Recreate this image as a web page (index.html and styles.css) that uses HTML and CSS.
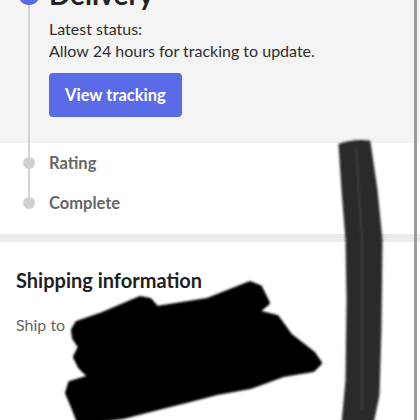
FILE: index.html
```html
<!DOCTYPE html>
<html>
<head>
<meta charset="utf-8">
<link rel="stylesheet" href="styles.css">
</head>
<body>
<div class="page">
  <section class="current">
    <div class="rail rail-current">
      <span class="dot dot-active"></span>
      <span class="seg"></span>
    </div>
    <div class="current-body">
      <h2 class="step-title">Delivery</h2>
      <p class="status">Latest status:<br>Allow 24 hours for tracking to update.</p>
      <button class="btn">View tracking</button>
    </div>
  </section>
  <section class="upcoming">
    <div class="step">
      <div class="rail"><span class="seg"></span><span class="dot"></span><span class="seg"></span></div>
      <div class="step-label">Rating</div>
    </div>
    <div class="step">
      <div class="rail"><span class="seg"></span><span class="dot"></span><span class="seg seg-none"></span></div>
      <div class="step-label">Complete</div>
    </div>
  </section>
  <div class="divider"></div>
  <section class="shipping">
    <h3 class="ship-title">Shipping information</h3>
    <p class="ship-to">Ship to</p>
  </section>
</div>
<div class="scrollbar"></div>
<svg class="scribble" width="420" height="420" viewBox="0 0 420 420">
  <defs><filter id="soft" x="-10%" y="-10%" width="120%" height="120%"><feGaussianBlur stdDeviation="1.3"/></filter></defs>
  <g filter="url(#soft)">
    <path fill="#060606" stroke="#060606" stroke-width="4" stroke-linejoin="round" d="M73 330 L77 323 L100 315 L140 298 L150 300 L157 308 L207 300 L250 283 L260 287 L268 303 L257 312 L277 317 L290 335 L313 353 L320 363 L313 370 L283 375 L250 387 L217 393 L190 400 L150 410 L123 417 L100 420 L78 420 L73 407 L67 393 L70 383 L90 377 L80 367 L75 357 L80 347 L74 338 Z"/>
    <path fill="#2a2a2a" stroke="#2a2a2a" stroke-width="3" stroke-linejoin="round" d="M340 145 Q354 140 369 142 L376 190 L381 240 L380 330 L378 395 L372 424 L343 424 L347 380 L348 300 L347 240 L343 190 Z"/>
    <path fill="none" stroke="#3a3a3a" stroke-width="2" d="M356 146 L362 240 L362 410"/>
  </g>
</svg>
</body>
</html>
```

FILE: styles.css
```css
* { box-sizing: border-box; }
html, body { margin: 0; padding: 0; }
body {
  width: 420px;
  height: 420px;
  overflow: hidden;
  background: #fff;
  font-family: Lato, "Noto Sans", sans-serif;
  color: #2b2b2b;
  position: relative;
}
.page { margin-top: -23px; }

.rail {
  width: 49px;
  padding-left: 8px;
  display: flex;
  flex-direction: column;
  align-items: center;
  flex: none;
}
.rail > * { flex: none; }
.seg { width: 2px; flex: 1 1 auto; background: #d2d2d4; }
.seg-none { background: transparent; }
.dot { width: 12px; height: 12px; border-radius: 50%; background: #cfcfd3; }
.dot-active { width: 22px; height: 22px; background: #5a6be8; margin-top: 6px; }

.current {
  display: flex;
  background: #f4f4f4;
}
.rail-current { align-self: stretch; }
.current-body { padding-bottom: 26px; }
.step-title {
  margin: 0;
  font-size: 28px;
  line-height: 34px;
  font-weight: 700;
  color: #222;
}
.status {
  margin: 7px 0 0;
  font-size: 16px;
  line-height: 22px;
  color: #2e2e2e;
}
.btn {
  margin-top: 11px;
  height: 44px;
  padding: 0 16px;
  border: 0;
  border-radius: 4px;
  background: #5a6be8;
  color: #fff;
  font-family: inherit;
  font-size: 16.5px;
  font-weight: 700;
  display: block;
}

.upcoming { padding-bottom: 11px; }
.step { display: flex; height: 40px; }
.step .rail { align-self: stretch; }
.step-label {
  display: flex;
  align-items: center;
  font-size: 16.5px;
  font-weight: 700;
  color: #666;
}

.divider { height: 8px; background: #ebebed; }

.shipping { padding: 25px 16px 0; }
.ship-title {
  margin: 0;
  font-size: 20px;
  line-height: 26px;
  font-weight: 700;
  color: #1f1f1f;
}
.ship-to {
  margin: 21px 0 0;
  font-size: 16px;
  line-height: 22px;
  color: #666;
}

.scrollbar {
  position: absolute;
  top: 0;
  left: 414px;
  width: 3px;
  height: 420px;
  background: #9b9b9b;
}
.scribble { position: absolute; left: 0; top: 0; }
```
